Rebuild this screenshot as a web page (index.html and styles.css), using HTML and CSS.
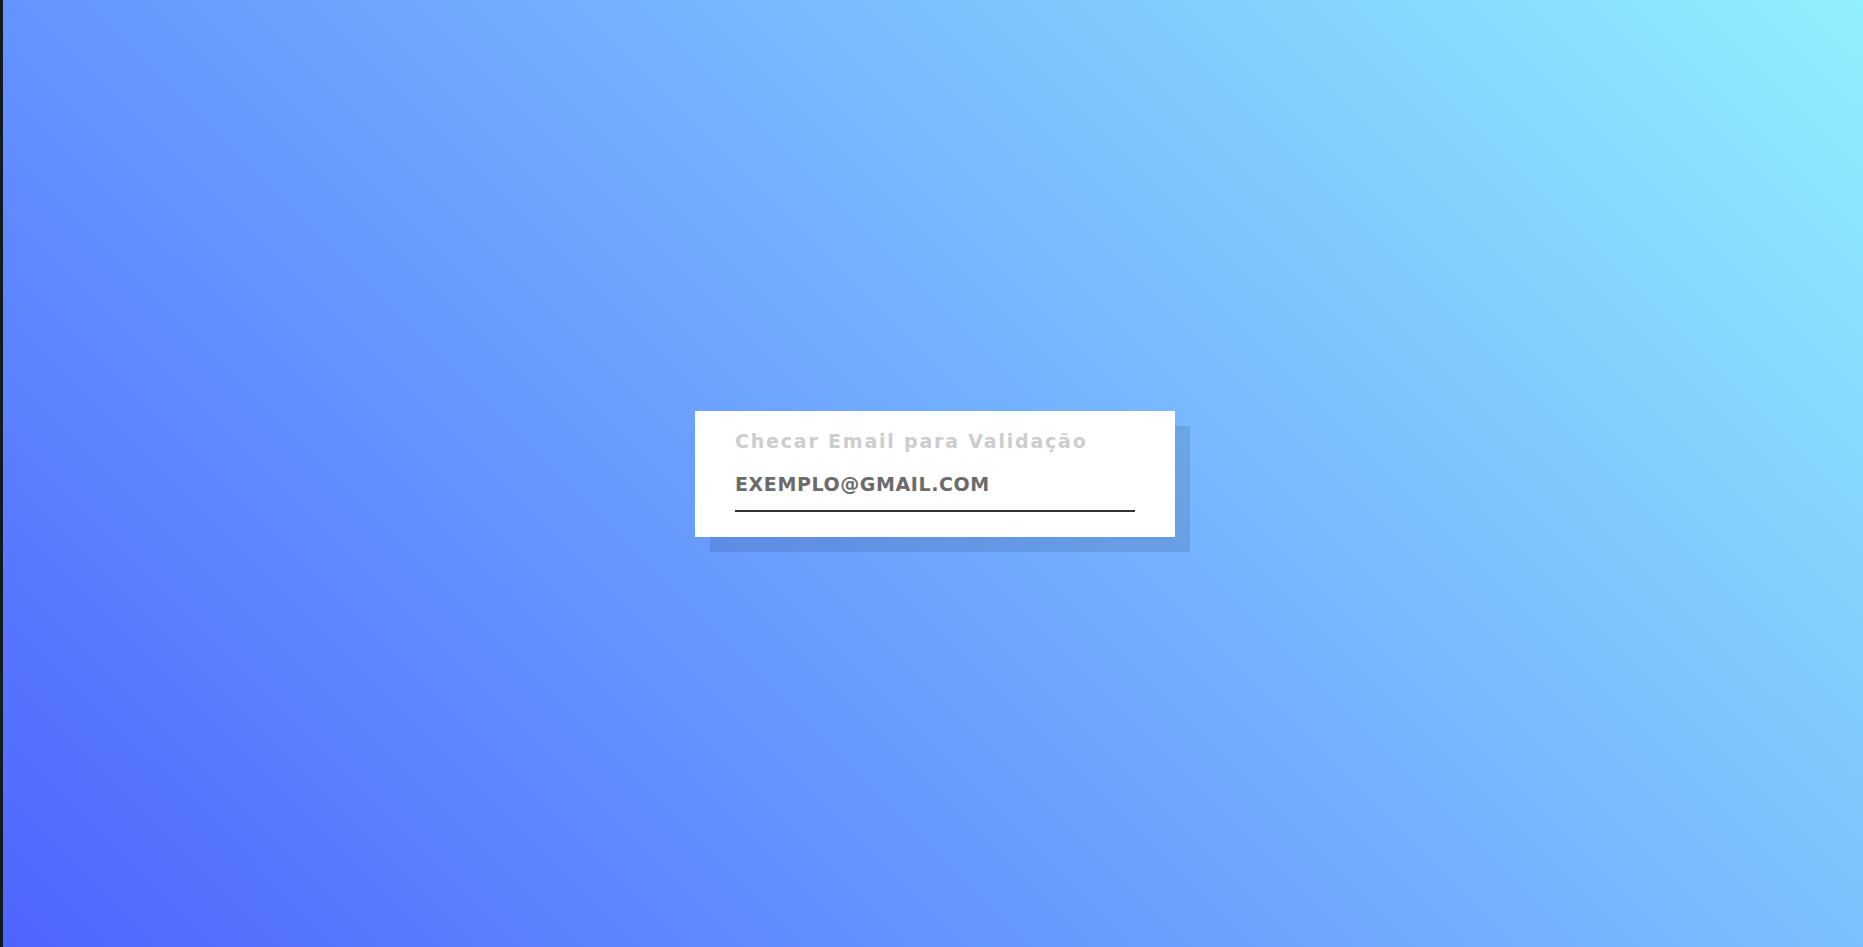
FILE: index.html
```html
<!DOCTYPE html>
<html lang="pt-BR">
<head>
<meta charset="utf-8">
<title>Checar Email</title>
<link rel="stylesheet" href="styles.css">
</head>
<body>
<div class="edge"></div>
<main class="stage">
  <form class="card">
    <div class="title">Checar Email para Validação</div>
    <label class="field"><span class="field-text">EXEMPLO@GMAIL.COM</span></label>
  </form>
</main>
</body>
</html>
```
FILE: styles.css
```css
html, body {
  margin: 0;
  height: 100%;
}
body {
  display: flex;
  font-family: "DejaVu Sans", "Open Sans", sans-serif;
}
.edge {
  width: 3px;
  background: #101a1f;
  flex: none;
}
.stage {
  flex: 1;
  display: flex;
  align-items: center;
  justify-content: center;
  background: linear-gradient(45deg, #4e65ff, #92effd);
  padding-left: 4px;
}
.card {
  width: 480px;
  height: 126px;
  box-sizing: border-box;
  margin: 0;
  padding: 17px 40px 0;
  background: #fff;
  box-shadow: 15px 15px 0 rgba(0, 0, 0, 0.1);
}
.title {
  font-size: 19px;
  line-height: 26px;
  font-weight: 700;
  letter-spacing: 1.8px;
  color: #cdcdcd;
  white-space: nowrap;
}
.field {
  display: block;
  margin-top: 18px;
  padding-bottom: 13px;
  border-bottom: 2px solid #333;
}
.field-text {
  display: block;
  font-size: 19px;
  line-height: 25px;
  font-weight: 700;
  letter-spacing: 0.6px;
  color: #6b6b6b;
}
```
